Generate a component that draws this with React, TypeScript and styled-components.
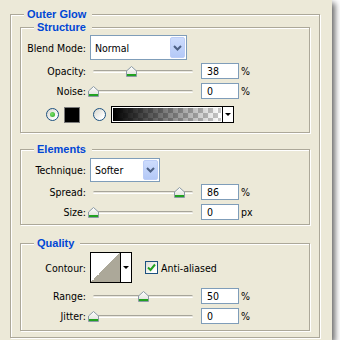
import styled, { createGlobalStyle } from "styled-components";

const GlobalStyle = createGlobalStyle`
  html, body {
    margin: 0;
    padding: 0;
    background: #fff;
  }
  body {
    font-family: "DejaVu Sans Condensed", "DejaVu Sans", sans-serif;
    font-stretch: condensed;
    font-size: 10.5px;
    color: #000;
  }
`;

const Panel = styled.div`
  width: 332px;
  height: 340px;
  box-sizing: border-box;
  background: #ece9d8;
  padding: 14px 12px 0 10px;
  box-shadow: 3px 3px 6px rgba(0, 0, 0, 0.6);
`;

// etched group box: grey line with a white line under it
const Group = styled.div<{ $mt?: number }>`
  margin-top: ${(p) => p.$mt ?? 0}px;
  border: 1px solid #aca899;
  box-shadow: inset 1px 1px 0 #fff, 1px 1px 0 #fff;
`;

const Legend = styled.div`
  width: fit-content;
  margin: -7px 0 0 13px;
  padding: 0 6px 0 3px;
  height: 13px;
  line-height: 13px;
  font-family: "Liberation Sans", Arial, sans-serif;
  font-stretch: normal;
  font-weight: bold;
  font-size: 11px;
  color: #0046d5;
  background: #ece9d8;
`;

const GroupBody = styled.div<{ $pt: number; $pb: number; $px?: number }>`
  padding: ${(p) => p.$pt}px ${(p) => p.$px ?? 0}px ${(p) => p.$pb}px;
  display: flex;
  flex-direction: column;
`;

const Row = styled.div<{ $h: number; $mt?: number; $pl?: number }>`
  display: flex;
  align-items: center;
  height: ${(p) => p.$h}px;
  margin-top: ${(p) => p.$mt ?? 0}px;
  padding-left: ${(p) => p.$pl ?? 0}px;
`;

const Label = styled.span`
  width: 65px;
  flex: none;
  text-align: right;
  white-space: nowrap;
`;

const Select = styled.div<{ $w: number }>`
  margin-left: 4px;
  width: ${(p) => p.$w}px;
  height: 100%;
  box-sizing: border-box;
  border: 1px solid #7f9db9;
  background: #fff;
  padding: 1px;
  display: flex;
  align-items: stretch;
`;

const SelectText = styled.span`
  flex: 1;
  padding-left: 3px;
  display: flex;
  align-items: center;
`;

const SelectButton = styled.div`
  width: 15px;
  box-sizing: border-box;
  border: 1px solid #bccdf7;
  border-radius: 2px;
  background: linear-gradient(#cddcfd, #b4c9f7);
  display: flex;
  align-items: center;
  justify-content: center;
`;

const SliderBox = styled.div`
  position: relative;
  align-self: flex-start;
  margin: 3px 0 0 2px;
  width: 110px;
  height: 11px;
  box-sizing: border-box;
  padding: 4px 5px 0;
`;

const Track = styled.div`
  height: 1px;
  border-top: 1px solid #a7a59a;
  border-bottom: 1px solid #fff;
  border-radius: 2px;
  background: #e9e7de;
`;

const Thumb = styled.svg`
  position: absolute;
  top: 0;
`;

const Field = styled.div`
  margin-left: 3px;
  width: 38px;
  height: 16px;
  box-sizing: border-box;
  border: 1px solid #7f9db9;
  background: #fff;
  padding-left: 5px;
  line-height: 14px;
`;

const Unit = styled.span`
  margin-left: 2px;
`;

const Radio = styled.span<{ $on?: boolean; $ml?: number }>`
  margin-left: ${(p) => p.$ml ?? 0}px;
  width: 13px;
  height: 13px;
  box-sizing: border-box;
  border-radius: 50%;
  border: 1px solid #1c5180;
  background: linear-gradient(135deg, #d6d5cc, #fff 80%);
  display: flex;
  align-items: center;
  justify-content: center;
  &::after {
    content: "";
    width: 5px;
    height: 5px;
    border-radius: 50%;
    background: ${(p) => (p.$on ? "radial-gradient(circle at 40% 40%, #7ee36b, #21a121)" : "transparent")};
  }
`;

const Swatch = styled.div`
  margin-left: 5px;
  width: 16px;
  height: 16px;
  box-sizing: border-box;
  border: 1px solid #7a7a7a;
  background: #000;
`;

const GradientBox = styled.div`
  margin-left: 5px;
  width: 123px;
  height: 17px;
  box-sizing: border-box;
  border: 1px solid #000;
  display: flex;
`;

const GradientFill = styled.div`
  flex: 1;
  border: 1px solid #fff;
  background: linear-gradient(to right, #000, rgba(0, 0, 0, 0)),
    repeating-conic-gradient(#c8c8c8 0 25%, #fff 0 50%) 0 0 / 10px 10px;
`;

const DropArrow = styled.div`
  width: 10px;
  flex: none;
  border-left: 1px solid #000;
  background: #fff;
  display: flex;
  align-items: center;
  justify-content: center;
  &::after {
    content: "";
    border-left: 3px solid transparent;
    border-right: 3px solid transparent;
    border-top: 3px solid #000;
  }
`;

const ContourBox = styled.div`
  margin-left: 4px;
  width: 42px;
  height: 31px;
  box-sizing: border-box;
  border: 1px solid #000;
  display: flex;
`;

const ContourPreview = styled.div`
  flex: 1;
  background: linear-gradient(to top left, #aca899 50%, #fff 50%);
`;

const CheckBox = styled.span`
  margin-left: 13px;
  width: 13px;
  height: 13px;
  box-sizing: border-box;
  border: 1px solid #1c5180;
  background: linear-gradient(135deg, #dcdcd5, #fff 80%);
  display: flex;
  align-items: center;
  justify-content: center;
`;

const CheckText = styled.span`
  margin-left: 3px;
`;

function SliderThumb({ value }: { value: number }) {
  return (
    <Thumb width="11" height="11" viewBox="0 0 11 11" style={{ left: value }}>
      <defs>
        <linearGradient id="tg" x1="0" y1="0" x2="0" y2="1">
          <stop offset="0" stopColor="#ffffff" />
          <stop offset="1" stopColor="#dcdcd6" />
        </linearGradient>
      </defs>
      <path d="M0.5 5 L5.5 0.5 L10.5 5 V10.5 H0.5 Z" fill="url(#tg)" stroke="#8b9aa5" />
      <rect x="1" y="8" width="9" height="2" fill="#21a121" />
    </Thumb>
  );
}

function SliderRow({ label, value, unit, mt }: { label: string; value: number; unit: string; mt: number }) {
  return (
    <Row $h={16} $mt={mt}>
      <Label>{label}</Label>
      <SliderBox>
        <Track />
        <SliderThumb value={value} />
      </SliderBox>
      <Field>{value}</Field>
      <Unit>{unit}</Unit>
    </Row>
  );
}

function Chevron() {
  return (
    <svg width="9" height="6" viewBox="0 0 9 6">
      <path d="M1 1 L4.5 4.5 L8 1" fill="none" stroke="#4d6185" strokeWidth="2" />
    </svg>
  );
}

function ComboBox({ text, width }: { text: string; width: number }) {
  return (
    <Select $w={width}>
      <SelectText>{text}</SelectText>
      <SelectButton>
        <Chevron />
      </SelectButton>
    </Select>
  );
}

export default function App() {
  return (
    <>
      <GlobalStyle />
      <Panel>
        <Group>
          <Legend>Outer Glow</Legend>
          <GroupBody $pt={0} $pb={6} $px={9}>
            <Group $mt={6}>
              <Legend>Structure</Legend>
              <GroupBody $pt={1} $pb={9}>
                <Row $h={25}>
                  <Label>Blend Mode:</Label>
                  <ComboBox text="Normal" width={97} />
                </Row>
                <SliderRow label="Opacity:" value={38} unit="%" mt={3} />
                <SliderRow label="Noise:" value={0} unit="%" mt={4} />
                <Row $h={17} $mt={7} $pl={25}>
                  <Radio $on />
                  <Swatch />
                  <Radio $ml={13} />
                  <GradientBox>
                    <GradientFill />
                    <DropArrow />
                  </GradientBox>
                </Row>
              </GroupBody>
            </Group>

            <Group $mt={16}>
              <Legend>Elements</Legend>
              <GroupBody $pt={2} $pb={4}>
                <Row $h={24}>
                  <Label>Technique:</Label>
                  <ComboBox text="Softer" width={70} />
                </Row>
                <SliderRow label="Spread:" value={86} unit="%" mt={2} />
                <SliderRow label="Size:" value={0} unit="px" mt={4} />
              </GroupBody>
            </Group>

            <Group $mt={18}>
              <Legend>Quality</Legend>
              <GroupBody $pt={2} $pb={6}>
                <Row $h={31}>
                  <Label>Contour:</Label>
                  <ContourBox>
                    <ContourPreview />
                    <DropArrow />
                  </ContourBox>
                  <CheckBox>
                    <svg width="9" height="9" viewBox="0 0 9 9">
                      <path d="M1 4.5 L3.5 7 L8 1.5" fill="none" stroke="#21a121" strokeWidth="2" />
                    </svg>
                  </CheckBox>
                  <CheckText>Anti-aliased</CheckText>
                </Row>
                <SliderRow label="Range:" value={50} unit="%" mt={5} />
                <SliderRow label="Jitter:" value={0} unit="%" mt={4} />
              </GroupBody>
            </Group>
          </GroupBody>
        </Group>
      </Panel>
    </>
  );
}
